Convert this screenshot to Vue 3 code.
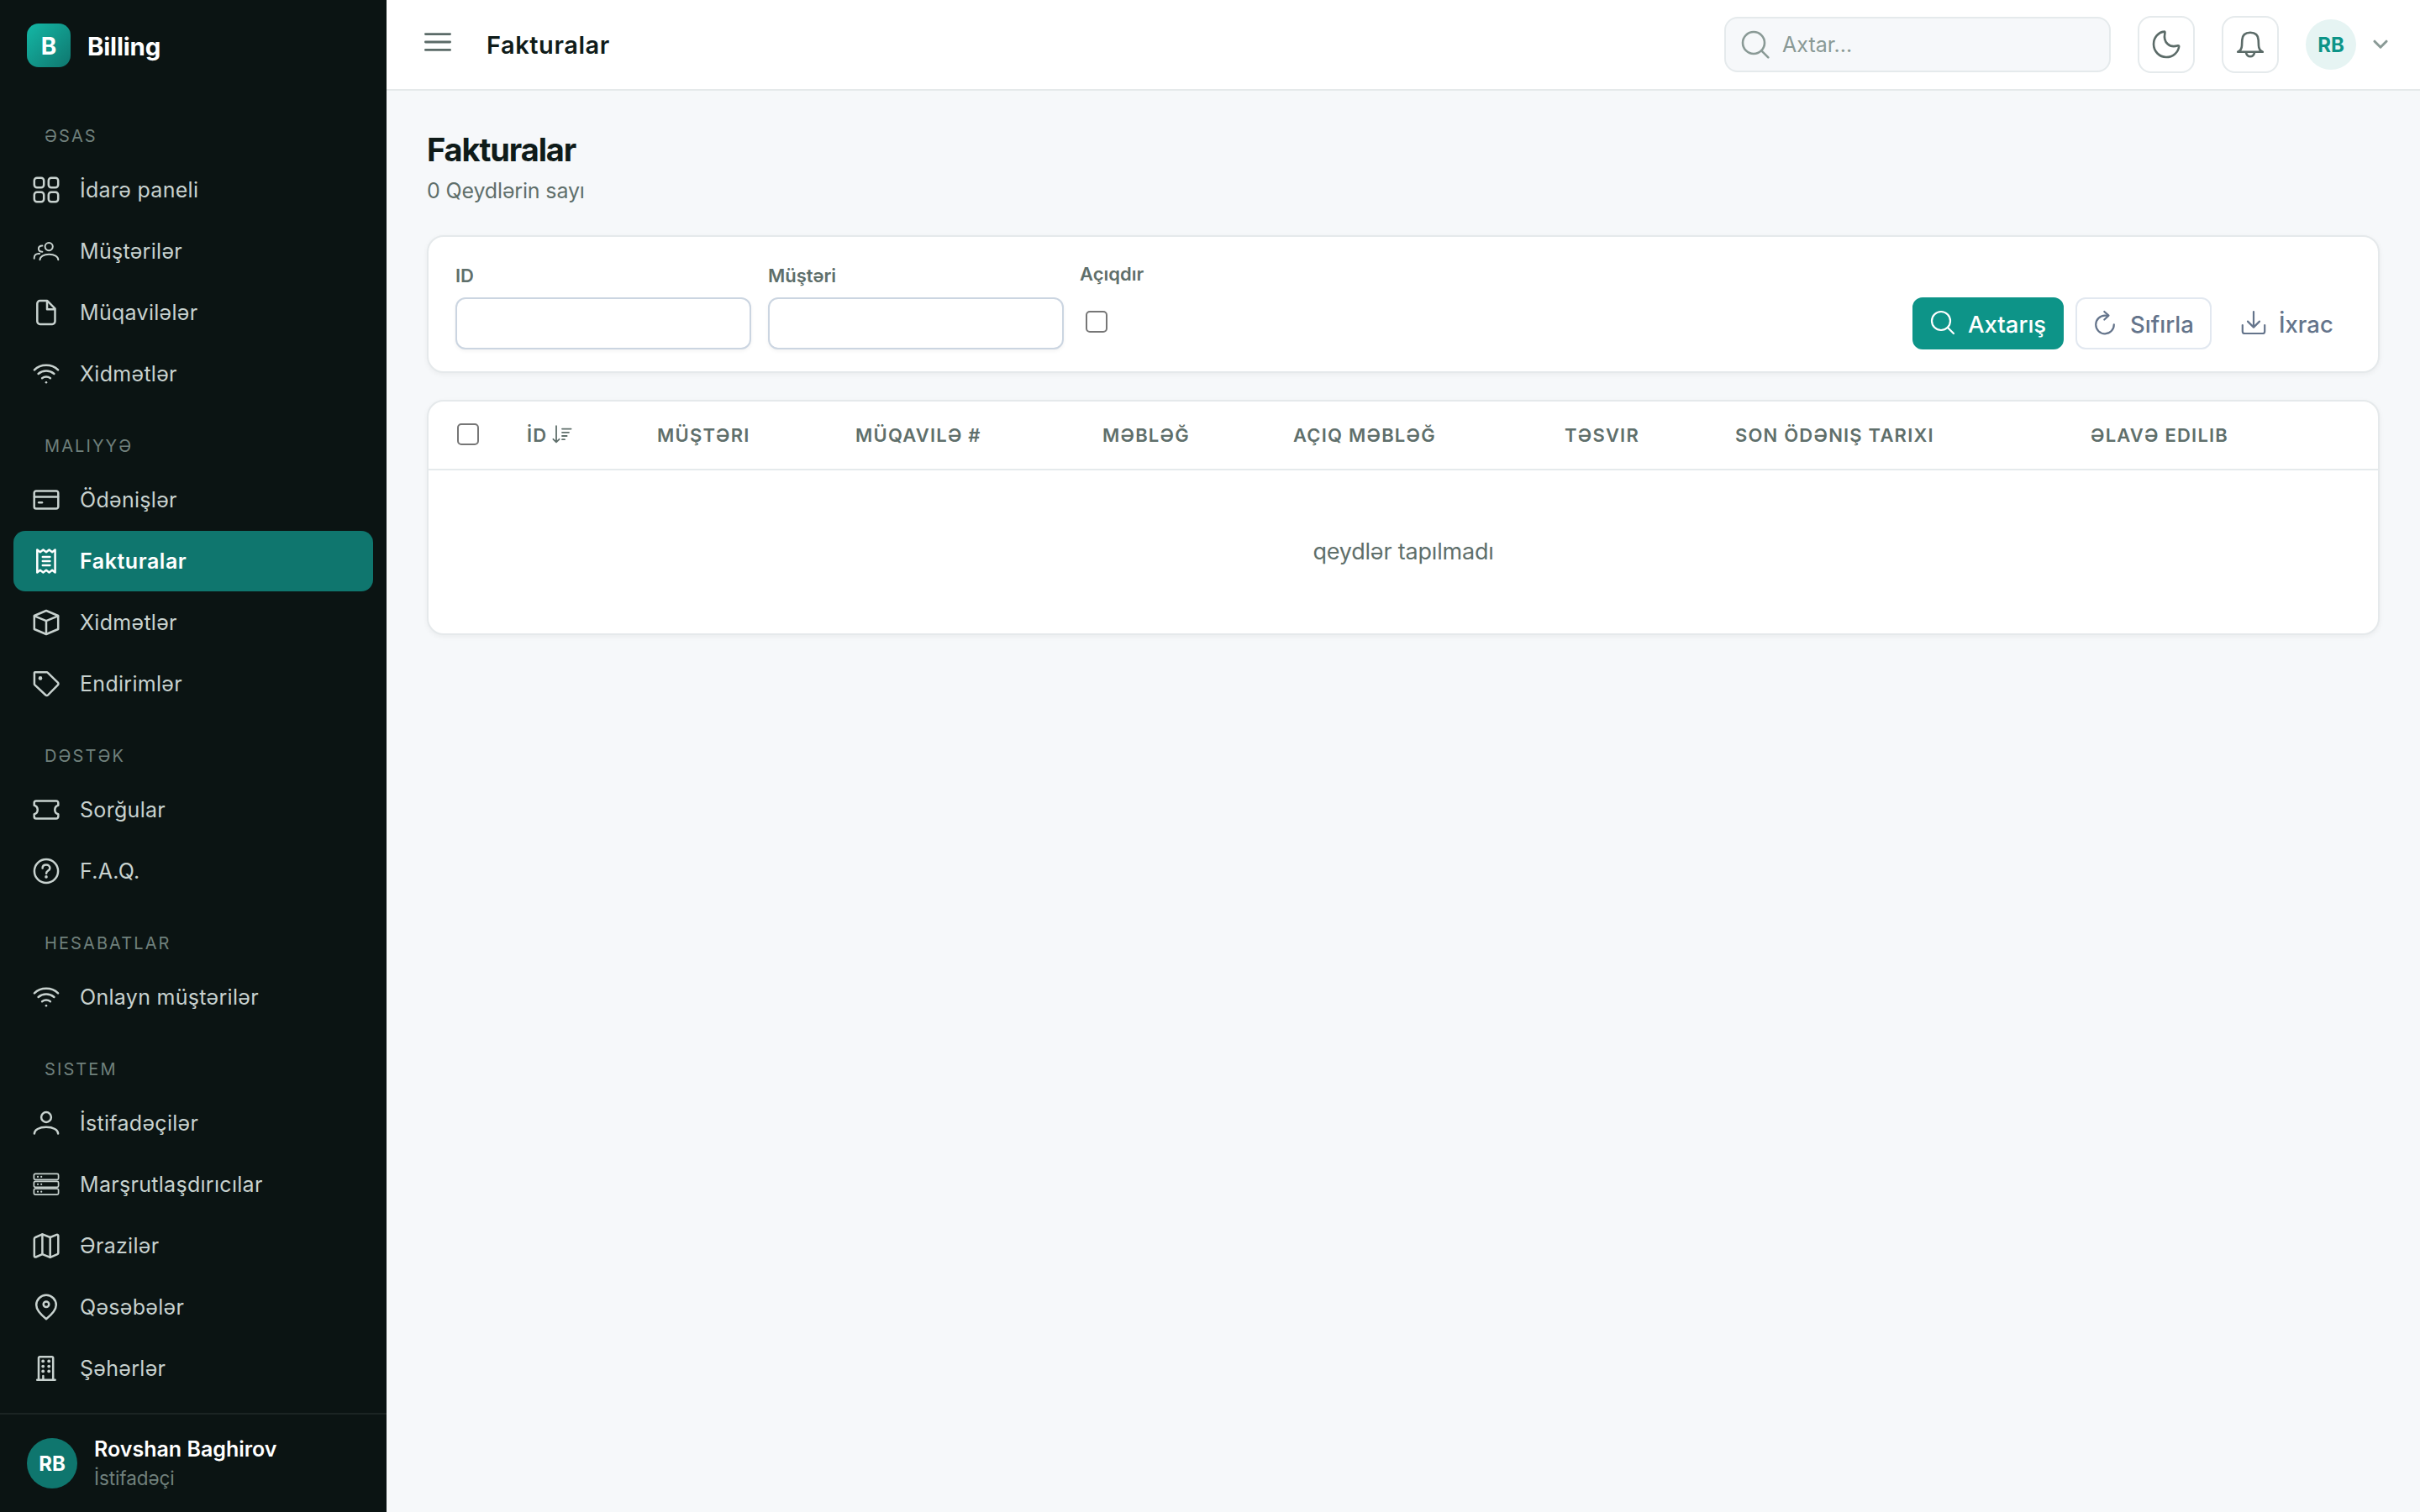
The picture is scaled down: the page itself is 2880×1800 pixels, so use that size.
<script setup>
import { ref } from "vue";

const icons = {
  grid: {
    paths: [
      "M5 1.8h5a3.2 3.2 0 0 1 3.2 3.2v5a3.2 3.2 0 0 1-3.2 3.2H5A3.2 3.2 0 0 1 1.8 10V5A3.2 3.2 0 0 1 5 1.8z",
      "M22 1.8h5a3.2 3.2 0 0 1 3.2 3.2v5a3.2 3.2 0 0 1-3.2 3.2h-5a3.2 3.2 0 0 1-3.2-3.2V5A3.2 3.2 0 0 1 22 1.8z",
      "M5 18.8h5a3.2 3.2 0 0 1 3.2 3.2v5a3.2 3.2 0 0 1-3.2 3.2H5A3.2 3.2 0 0 1 1.8 27v-5A3.2 3.2 0 0 1 5 18.8z",
      "M22 18.8h5a3.2 3.2 0 0 1 3.2 3.2v5a3.2 3.2 0 0 1-3.2 3.2h-5a3.2 3.2 0 0 1-3.2-3.2v-5a3.2 3.2 0 0 1 3.2-3.2z",
    ],
  },
  people: {
    width: 2,
    paths: [
      "M19.2 6a4.6 4.6 0 1 1 0 9.2 4.6 4.6 0 0 1 0-9.2z",
      "M8.5 26.2c0-3.8 4.4-6.5 10.9-6.5s10.9 2.7 10.9 6.5",
      "M11.4 9.4c-2.7 0-4.5 1.4-4.5 3.6s1.8 3.7 4.5 3.7",
      "M1.7 24.8v-.7c0-3.2 2.2-5.2 5.2-5.2h1.2",
    ],
  },
  file: {
    paths: [
      "M8.6 2.1h8.7l9.2 9.2v15.3a3.3 3.3 0 0 1-3.3 3.3H8.6a3.3 3.3 0 0 1-3.3-3.3V5.4a3.3 3.3 0 0 1 3.3-3.3z",
      "M17 2.6v9.6h9",
    ],
  },
  wifi: {
    paths: [
      "M1.9 11.3C5.6 7.6 10.6 5.7 16 5.7s10.4 1.9 14.1 5.6",
      "M6.6 16c2.8-2.3 5.8-3.4 9.4-3.4s6.6 1.1 9.4 3.4",
      "M11.1 21.2c1.5-1.1 3.1-1.6 4.9-1.6s3.4.5 4.9 1.6",
    ],
    dots: [[16, 26.2, 1.3]],
  },
  card: {
    paths: [
      "M4 5.4h24a2.3 2.3 0 0 1 2.3 2.3v16.6a2.3 2.3 0 0 1-2.3 2.3H4a2.3 2.3 0 0 1-2.3-2.3V7.7A2.3 2.3 0 0 1 4 5.4z",
      "M2 12.4h28",
      "M7.2 19.3h3.8",
    ],
  },
  receipt: {
    paths: [
      "M5.3 2.6l3.5 2.6 3.6-2.6L16 5.2l3.5-2.6 3.6 2.6 3.5-2.6v26.8l-3.5-2.6-3.6 2.6-3.5-2.6-3.6 2.6-3.6-2.6-3.5 2.6z",
      "M11.8 11h8.6M11.8 16h8.6M11.8 21h8.6",
    ],
  },
  box: {
    paths: ["M16 2l14.2 6v16L16 30 1.8 24V8z", "M2 8.4l14 5.8 14-5.8M16 14.2V29.6"],
  },
  tag: {
    paths: [
      "M2.7 2.2h14a1.3 1.3 0 0 1 .9.4l12.3 12.1a1.8 1.8 0 0 1 0 2.6L18 29.5a1.8 1.8 0 0 1-2.6 0L2.4 17.4a1.5 1.5 0 0 1-.5-1V3a.8.8 0 0 1 .8-.8z",
    ],
    dots: [[9, 9.4, 2.3]],
  },
  ticket: {
    paths: [
      "M4 5.4h24a2.3 2.3 0 0 1 2.3 2.3v3a5.5 5.5 0 0 0 0 10.6v3a2.3 2.3 0 0 1-2.3 2.3H4a2.3 2.3 0 0 1-2.3-2.3v-3a5.5 5.5 0 0 0 0-10.6v-3A2.3 2.3 0 0 1 4 5.4z",
    ],
  },
  question: {
    paths: [
      "M16 1.9a14.1 14.1 0 1 1 0 28.2 14.1 14.1 0 0 1 0-28.2z",
      "M11.6 12.5c0-2.4 1.9-3.9 4.4-3.9s4.4 1.6 4.4 3.9c0 3.1-4.3 3.1-4.3 6.2",
    ],
    dots: [[16, 22.9, 1.8]],
  },
  user: {
    paths: [
      "M16 3.1a5.9 5.9 0 1 1 0 11.8 5.9 5.9 0 0 1 0-11.8z",
      "M1.9 28.6c0-4.6 5.6-7.8 14.1-7.8s14.1 3.2 14.1 7.8",
    ],
  },
  server: {
    width: 1.7,
    paths: [
      "M3 3.4h26a1.6 1.6 0 0 1 1.6 1.6v3.8a1.6 1.6 0 0 1-1.6 1.6H3a1.6 1.6 0 0 1-1.6-1.6V5A1.6 1.6 0 0 1 3 3.4z",
      "M3 12.3h26a1.6 1.6 0 0 1 1.6 1.6v3.8a1.6 1.6 0 0 1-1.6 1.6H3a1.6 1.6 0 0 1-1.6-1.6v-3.8A1.6 1.6 0 0 1 3 12.3z",
      "M3 21.2h26a1.6 1.6 0 0 1 1.6 1.6v3.8a1.6 1.6 0 0 1-1.6 1.6H3a1.6 1.6 0 0 1-1.6-1.6v-3.8A1.6 1.6 0 0 1 3 21.2z",
    ],
    dots: [
      [6, 6.9, 1.1],
      [10.2, 6.9, 1.1],
      [6, 15.8, 1.1],
      [10.2, 15.8, 1.1],
      [6, 24.7, 1.1],
      [10.2, 24.7, 1.1],
    ],
  },
  map: {
    paths: [
      "M3.2 6l8.2-3.6 9.3 3.6 7.8-3.2a1.3 1.3 0 0 1 1.8 1.2v20.6a1.7 1.7 0 0 1-1 1.6l-8.6 3.7-9.3-3.8-7.8 3.4a1.3 1.3 0 0 1-1.8-1.2V7.7A1.8 1.8 0 0 1 3.2 6z",
      "M11.4 2.6v23.4M20.7 6v23.7",
    ],
  },
  pin: {
    paths: [
      "M16 30.2C10.4 25.8 4.2 20 4.2 13.6a11.8 11.8 0 0 1 23.6 0C27.8 20 21.6 25.8 16 30.2z",
      "M16 9.4a3.3 3.3 0 1 1 0 6.6 3.3 3.3 0 0 1 0-6.6z",
    ],
  },
  building: {
    paths: ["M7 29V3.6A1.4 1.4 0 0 1 8.4 2.2h14.4a1.4 1.4 0 0 1 1.4 1.4V29", "M5.2 29.7h21.4", "M12.4 25v4"],
    dots: [
      [12.2, 7.4, 1.9],
      [19.2, 7.4, 1.9],
      [12.2, 13.6, 1.9],
      [19.2, 13.6, 1.9],
      [12.2, 19.4, 1.9],
      [19.2, 19.4, 1.9],
    ],
  },
};

const menu = [
  {
    title: "ƏSAS",
    items: [
      { label: "İdarə paneli", icon: "grid" },
      { label: "Müştərilər", icon: "people" },
      { label: "Müqavilələr", icon: "file" },
      { label: "Xidmətlər", icon: "wifi" },
    ],
  },
  {
    title: "MALIYYƏ",
    items: [
      { label: "Ödənişlər", icon: "card" },
      { label: "Fakturalar", icon: "receipt", active: true },
      { label: "Xidmətlər", icon: "box" },
      { label: "Endirimlər", icon: "tag" },
    ],
  },
  {
    title: "DƏSTƏK",
    items: [
      { label: "Sorğular", icon: "ticket" },
      { label: "F.A.Q.", icon: "question" },
    ],
  },
  {
    title: "HESABATLAR",
    items: [{ label: "Onlayn müştərilər", icon: "wifi" }],
  },
  {
    title: "SISTEM",
    items: [
      { label: "İstifadəçilər", icon: "user" },
      { label: "Marşrutlaşdırıcılar", icon: "server" },
      { label: "Ərazilər", icon: "map" },
      { label: "Qəsəbələr", icon: "pin" },
      { label: "Şəhərlər", icon: "building" },
    ],
  },
];

const columns = [
  { key: "id", label: "İD", sorted: true },
  { key: "customer", label: "MÜŞTƏRI" },
  { key: "contract", label: "MÜQAVILƏ #" },
  { key: "amount", label: "MƏBLƏĞ" },
  { key: "open", label: "AÇIQ MƏBLƏĞ" },
  { key: "desc", label: "TƏSVIR" },
  { key: "due", label: "SON ÖDƏNIŞ TARIXI" },
  { key: "created", label: "ƏLAVƏ EDILIB" },
];

const search = ref("");
const filters = ref({ id: "", customer: "", open: false });
const allSelected = ref(false);

const resetFilters = () => {
  filters.value = { id: "", customer: "", open: false };
};
</script>

<template>
  <div class="layout">
    <aside class="sidebar">
      <div class="brand">
        <span class="brand-logo">B</span>
        <span class="brand-name">Billing</span>
      </div>

      <nav class="menu">
        <div v-for="group in menu" :key="group.title" class="menu-group">
          <div class="menu-title">{{ group.title }}</div>
          <a
            v-for="item in group.items"
            :key="item.label"
            class="menu-item"
            :class="{ 'menu-item-active': item.active }"
          >
            <svg class="menu-icon" viewBox="0 0 32 32" :stroke-width="icons[item.icon].width || 2.5">
              <path v-for="d in icons[item.icon].paths" :key="d" :d="d" />
              <circle
                v-for="(dot, i) in icons[item.icon].dots || []"
                :key="i"
                class="dot"
                :cx="dot[0]"
                :cy="dot[1]"
                :r="dot[2]"
              />
            </svg>
            <span>{{ item.label }}</span>
          </a>
        </div>
      </nav>

      <div class="account">
        <span class="account-avatar">RB</span>
        <div class="account-info">
          <div class="account-name">Rovshan Baghirov</div>
          <div class="account-role">İstifadəçi</div>
        </div>
      </div>
    </aside>

    <div class="main">
      <header class="topbar">
        <svg class="burger" viewBox="0 0 32 32">
          <path d="M1.4 6.6h29.2M1.4 16h29.2M1.4 25.4h29.2" />
        </svg>
        <div class="topbar-title">Fakturalar</div>

        <div class="search">
          <svg class="search-icon" viewBox="0 0 34 34">
            <circle cx="15" cy="15" r="13" />
            <path d="M24.3 24.3l8 8" />
          </svg>
          <input v-model="search" type="text" class="search-input" placeholder="Axtar..." />
        </div>

        <button class="icon-btn">
          <svg viewBox="0 0 34 34">
            <path
              d="M14.6 1.6C7.6 2.3 2 8.7 2 16.6 2 25.2 8.8 32 17 32c7.8 0 14.2-5.4 15.2-12.6.1-1-.8-1.4-1.6-1.1-9.4 3.1-17.6-3.6-15.2-14.9.2-1-.1-1.9-.8-1.8z"
            />
          </svg>
        </button>
        <button class="icon-btn">
          <svg viewBox="0 0 34 34">
            <path
              d="M2.2 25.8c3.2-1.2 4.6-3.6 4.8-7.4l.3-6.8C7.6 5.8 11.4 2.8 17 2.8s9.4 3 9.7 8.8l.3 6.8c.2 3.8 1.6 6.2 4.8 7.4z"
            />
            <path d="M11.9 26.2c.6 3.2 2.4 5 5.1 5s4.5-1.8 5.1-5" />
          </svg>
        </button>

        <div class="profile">
          <span class="profile-avatar">RB</span>
          <svg class="chevron" viewBox="0 0 18 12">
            <path d="M2 2.2l7 7 7-7" />
          </svg>
        </div>
      </header>

      <main class="content">
        <h1 class="page-title">Fakturalar</h1>
        <div class="page-subtitle">0 Qeydlərin sayı</div>

        <section class="card filters">
          <div class="field">
            <label class="field-label">ID</label>
            <input v-model="filters.id" type="text" class="field-input" />
          </div>
          <div class="field">
            <label class="field-label">Müştəri</label>
            <input v-model="filters.customer" type="text" class="field-input" />
          </div>
          <div class="field field-check">
            <label class="field-label">Açıqdır</label>
            <input v-model="filters.open" type="checkbox" class="checkbox" />
          </div>

          <div class="actions">
            <button class="btn btn-primary">
              <svg viewBox="0 0 30 30">
                <circle cx="13" cy="13" r="11" />
                <path d="M21 21l7 7" />
              </svg>
              Axtarış
            </button>
            <button class="btn btn-outline" @click="resetFilters">
              <svg viewBox="0 0 30 30">
                <path d="M18.5 6.7H15A10.8 10.8 0 1 0 25.8 17.3" />
                <path d="M14.3 2l5.2 4.6-5.2 4.9" />
              </svg>
              Sıfırla
            </button>
            <button class="btn btn-text">
              <svg viewBox="0 0 30 30">
                <path d="M15 2v18.5M8 13.6l7 7 7-7M1.8 18v7.4A2.6 2.6 0 0 0 4.4 28h21.2a2.6 2.6 0 0 0 2.6-2.6V18" />
              </svg>
              İxrac
            </button>
          </div>
        </section>

        <section class="card">
          <table class="table">
            <thead>
              <tr>
                <th class="col-check">
                  <input v-model="allSelected" type="checkbox" class="checkbox" />
                </th>
                <th v-for="col in columns" :key="col.key" :class="`col-${col.key}`">
                  <span class="th-inner">
                    {{ col.label }}
                    <svg v-if="col.sorted" class="sort-icon" viewBox="0 0 24 22">
                      <path d="M5 1.2v19M1.4 16.8L5 20.4l3.6-3.6M12 4.6h10.6M12 8.8h8M12 13h5.6M12 17.2h3" />
                    </svg>
                  </span>
                </th>
              </tr>
            </thead>
            <tbody>
              <tr>
                <td :colspan="columns.length + 1" class="empty">qeydlər tapılmadı</td>
              </tr>
            </tbody>
          </table>
        </section>
      </main>
    </div>
  </div>
</template>

<style>
body {
  margin: 0;
  background: #f6f8fa;
}
</style>

<style scoped>
.layout {
  display: flex;
  width: 2880px;
  height: 1800px;
  overflow: hidden;
  font-family: Inter, "Liberation Sans", sans-serif;
  font-size: 26px;
  color: #0f1b19;
  background: #f6f8fa;
}

.layout * {
  box-sizing: border-box;
}

svg {
  display: block;
  flex-shrink: 0;
  fill: none;
  stroke: currentColor;
  stroke-linecap: round;
  stroke-linejoin: round;
}

/* sidebar */
.sidebar {
  display: flex;
  flex-direction: column;
  flex-shrink: 0;
  width: 460px;
  background: #0b1413;
}

.brand {
  display: flex;
  align-items: center;
  gap: 20px;
  height: 113px;
  padding: 0 32px 5px;
  flex-shrink: 0;
}

.brand-logo {
  display: flex;
  align-items: center;
  justify-content: center;
  width: 52px;
  height: 52px;
  padding-top: 2px;
  border-radius: 14px;
  background: linear-gradient(135deg, #14b8a6, #0f766e);
  color: #fff;
  font-size: 28px;
  font-weight: 700;
}

.brand-name {
  padding-top: 2px;
  color: #fff;
  font-size: 29.5px;
  font-weight: 700;
  letter-spacing: -0.2px;
}

.menu {
  flex: 1;
  min-height: 0;
  padding: 0 16px;
  overflow: hidden;
}

.menu-title {
  padding: 37px 37px 16px;
  line-height: 24px;
  font-size: 20px;
  letter-spacing: 2.1px;
  color: #70807c;
}

.menu-item {
  display: flex;
  align-items: center;
  gap: 24px;
  height: 72px;
  margin-bottom: 1px;
  padding: 0 23px;
  border-radius: 14px;
  color: #c8d2cf;
  font-size: 25px;
  letter-spacing: 0.3px;
}

.menu-item-active {
  background: #0f766e;
  color: #fff;
  font-weight: 600;
  letter-spacing: 0.55px;
}

.menu-icon {
  width: 32px;
  height: 32px;
}

.dot {
  fill: currentColor;
  stroke: none;
}

.account {
  display: flex;
  align-items: center;
  gap: 20px;
  height: 118px;
  padding: 0 32px;
  flex-shrink: 0;
  border-top: 2px solid #1b2423;
}

.account-avatar {
  display: flex;
  align-items: center;
  justify-content: center;
  width: 60px;
  height: 60px;
  border-radius: 50%;
  background: #0f766e;
  color: #fff;
  font-size: 24px;
  font-weight: 700;
}

.account-info {
  padding-top: 2px;
}

.account-name {
  color: #fff;
  font-size: 25px;
  font-weight: 600;
  line-height: 34px;
}

.account-role {
  color: #70807c;
  font-size: 22.5px;
  line-height: 36px;
  letter-spacing: -0.1px;
}

/* top bar */
.main {
  display: flex;
  flex-direction: column;
  flex: 1;
  min-width: 0;
}

.topbar {
  display: flex;
  align-items: center;
  height: 108px;
  flex-shrink: 0;
  padding: 0 38px 0 45px;
  background: #fff;
  border-bottom: 2px solid #e5e9ea;
}

.burger {
  width: 32px;
  height: 32px;
  margin-bottom: 6px;
  color: #5b6b68;
  stroke-width: 2.8;
}

.topbar-title {
  margin-left: 42px;
  font-size: 29px;
  font-weight: 600;
  letter-spacing: 0.55px;
}

.search {
  display: flex;
  align-items: center;
  gap: 15px;
  width: 460px;
  height: 66px;
  margin-left: auto;
  margin-right: 32px;
  padding: 0 18px;
  border: 2px solid #e5eaec;
  border-radius: 16px;
  background: #f6f8fa;
}

.search-icon {
  width: 34px;
  height: 34px;
  color: #8a9a96;
  stroke-width: 2.6;
}

.search-input {
  flex: 1;
  min-width: 0;
  padding: 0;
  border: none;
  outline: none;
  background: transparent;
  font-family: inherit;
  font-size: 25px;
}

.search-input::placeholder {
  color: #8a9a96;
  opacity: 1;
}

.icon-btn {
  display: flex;
  align-items: center;
  justify-content: center;
  width: 68px;
  height: 68px;
  margin-right: 32px;
  padding: 0;
  border: 2px solid #e5eaec;
  border-radius: 16px;
  background: #fff;
  color: #5b6b68;
}

.icon-btn svg {
  width: 34px;
  height: 34px;
  stroke-width: 2.6;
}

.profile {
  display: flex;
  align-items: center;
  gap: 20px;
}

.profile-avatar {
  display: flex;
  align-items: center;
  justify-content: center;
  width: 60px;
  height: 60px;
  border-radius: 50%;
  background: #e6f4f3;
  color: #0d9488;
  font-size: 24px;
  font-weight: 700;
}

.chevron {
  width: 18px;
  height: 12px;
  color: #8a9a96;
  stroke-width: 3;
}

/* page */
.content {
  flex: 1;
  padding: 47px 48px 0;
}

.page-title {
  margin: 0;
  line-height: 46px;
  font-size: 38px;
  font-weight: 700;
  letter-spacing: -1.1px;
}

.page-subtitle {
  margin: 8px 0 35px;
  line-height: 36px;
  font-size: 25px;
  letter-spacing: -0.15px;
  color: #5f6f6b;
}

.card {
  border: 2px solid #e5e9eb;
  border-radius: 20px;
  background: #fff;
  box-shadow: 0 2px 6px rgba(15, 27, 25, 0.05);
}

.filters {
  display: flex;
  align-items: flex-start;
  gap: 20px;
  height: 164px;
  margin-bottom: 32px;
  padding: 0 32px;
}

.field {
  display: flex;
  flex-direction: column;
  width: 352px;
  padding-top: 30px;
}

.field-label {
  margin-bottom: 10px;
  line-height: 32px;
  font-size: 22px;
  font-weight: 600;
  color: #5f6f6b;
}

.field-input {
  width: 100%;
  height: 62px;
  padding: 0 20px;
  border: 2px solid #cbd5e1;
  border-radius: 12px;
  outline: none;
  background: #fff;
  font-size: 26px;
  box-shadow: 0 2px 4px rgba(18, 18, 23, 0.05);
}

.field-check {
  width: auto;
  margin-left: -1px;
  padding-top: 28px;
}

.checkbox {
  display: block;
  appearance: none;
  width: 26px;
  height: 26px;
  margin: 0;
  border: 2px solid #767676;
  border-radius: 5px;
  background: #fff;
}

.field-check .checkbox {
  margin: 18px 0 0 7px;
}

.actions {
  display: flex;
  gap: 14px;
  margin-left: auto;
  padding-top: 72px;
}

.btn {
  display: flex;
  align-items: center;
  height: 62px;
  padding: 2px 19px 0;
  border: 2px solid transparent;
  border-radius: 12px;
  background: transparent;
  font-family: inherit;
  font-size: 27.5px;
  font-weight: 500;
  color: #64748b;
}

.btn svg {
  width: 30px;
  height: 30px;
  margin: 0 15px 4px 0;
  stroke-width: 2.2;
}

.btn-primary {
  width: 180px;
  background: #0d9488;
  border-color: #0d9488;
  color: #fff;
}

.btn-outline {
  width: 162px;
  padding-left: 18px;
  border-color: #e2e8f0;
}

.btn-text {
  width: 152px;
}

/* table */
.table {
  width: 100%;
  table-layout: fixed;
  border-collapse: separate;
  border-spacing: 0;
}

.table th {
  height: 82px;
  padding: 0 0 0 35px;
  border-bottom: 2px solid #e5eaec;
  text-align: left;
  font-size: 22px;
  font-weight: 600;
  letter-spacing: 1.2px;
  white-space: nowrap;
  color: #5f6f6b;
}

.table th.col-check {
  width: 82px;
  padding: 0 0 2px 34px;
}

.th-inner {
  display: flex;
  align-items: center;
  gap: 6px;
}

.sort-icon {
  width: 24px;
  height: 22px;
  margin-bottom: 3px;
  stroke-width: 1.8;
}

.col-id {
  width: 155px;
}

.col-customer {
  width: 236px;
}

.col-contract {
  width: 294px;
}

.col-amount {
  width: 227px;
}

.col-open {
  width: 323px;
}

.col-desc {
  width: 203px;
}

.col-due {
  width: 423px;
}

.empty {
  height: 194px;
  padding: 0 0 2px;
  text-align: center;
  font-size: 27px;
  letter-spacing: -0.2px;
  color: #5f6f6b;
}
</style>
